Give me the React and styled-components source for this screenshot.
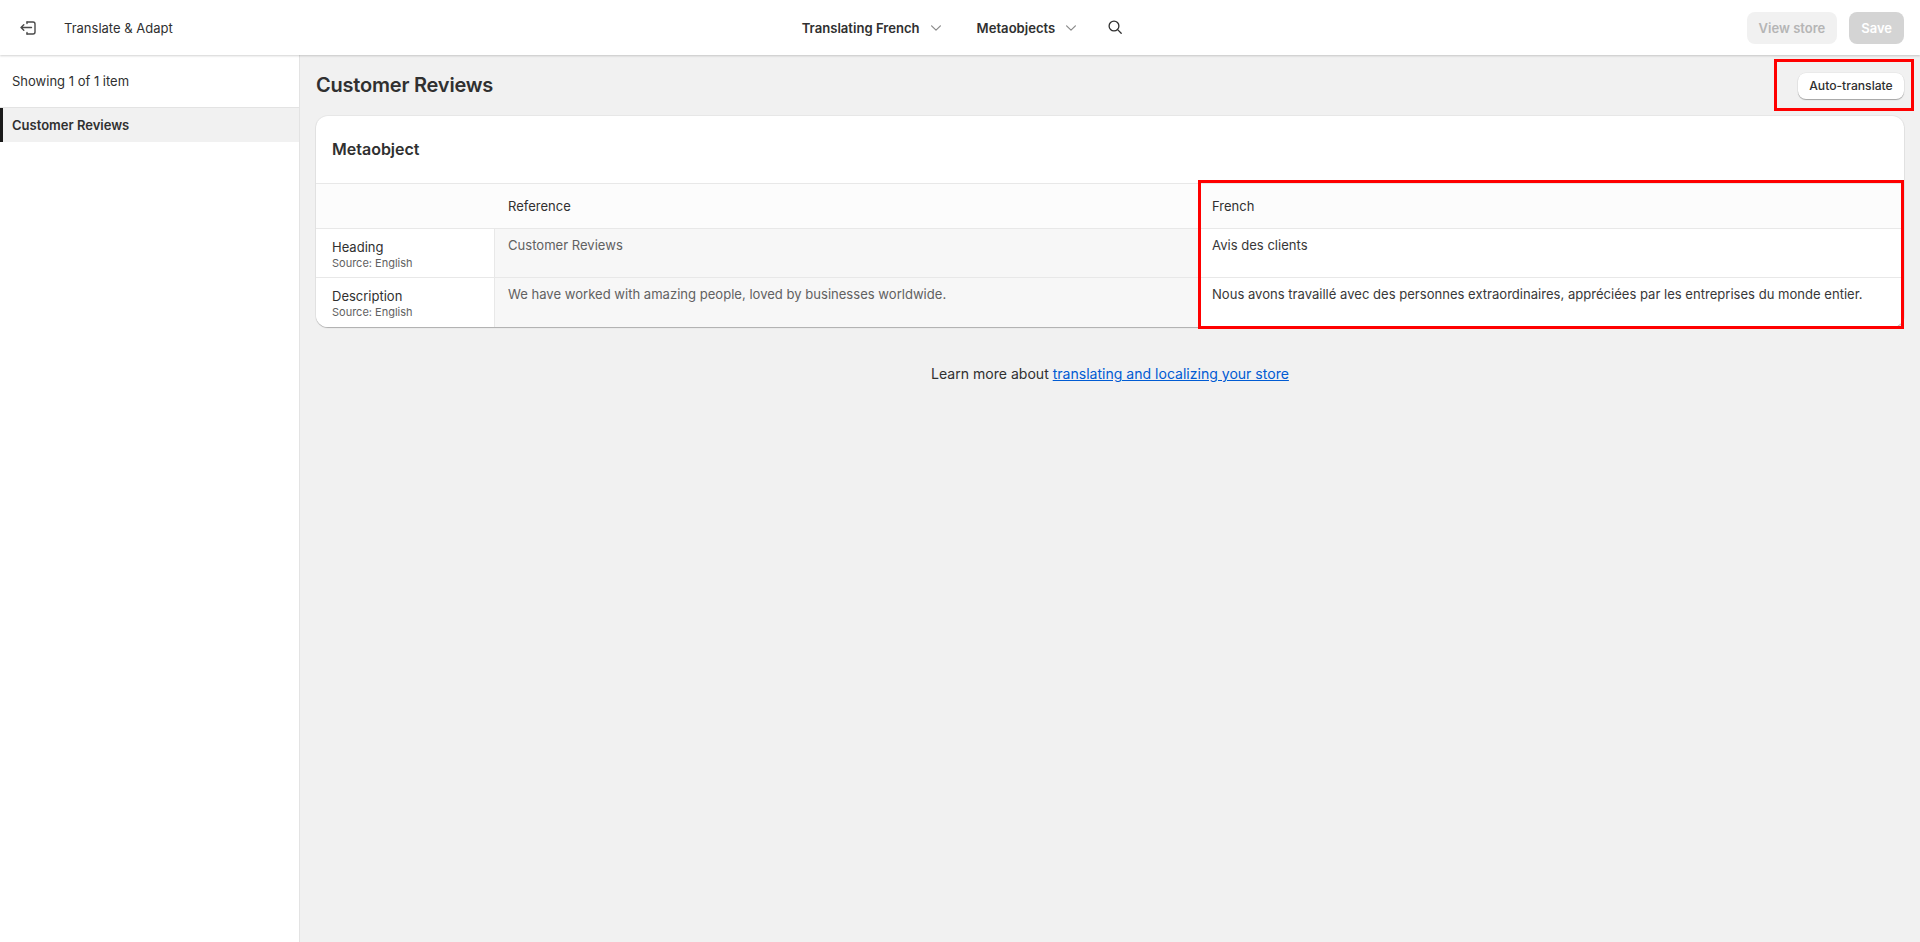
import React from 'react';
import styled, { createGlobalStyle } from 'styled-components';

const GlobalStyle = createGlobalStyle`
  html, body, #root {
    margin: 0;
    height: 100%;
  }
  body {
    font-family: Inter, "Noto Sans", sans-serif;
    font-size: 13px;
    color: #303030;
    background: #f1f1f1;
  }
`;

const Page = styled.div`
  position: relative;
  display: flex;
  flex-direction: column;
  height: 942px;
  overflow: hidden;
`;

const TopBar = styled.header`
  display: grid;
  grid-template-columns: 1fr auto 1fr;
  align-items: center;
  height: 55px;
  padding: 0 16px 0 20px;
  background: #fff;
  box-shadow: 0 1px 2px rgba(0, 0, 0, 0.18);
  position: relative;
  z-index: 1;
`;

const BarLeft = styled.div`
  display: flex;
  align-items: center;
  gap: 28px;
`;

const AppName = styled.span`
  font-size: 13px;
  color: #303030;
`;

const BarCenter = styled.nav`
  display: flex;
  align-items: center;
  gap: 36px;
`;

const NavItem = styled.div`
  display: flex;
  align-items: center;
  gap: 11px;
  font-size: 13.1px;
  font-weight: 600;
  color: #303030;
`;

const SearchWrap = styled.div`
  display: flex;
  margin: -2px 0 0 -4px;
`;

const BarRight = styled.div`
  display: flex;
  justify-content: flex-end;
  gap: 12px;
`;

const TopButton = styled.button`
  height: 32px;
  padding: 0 12px;
  border: none;
  border-radius: 8px;
  font-family: inherit;
  font-size: 13px;
  font-weight: 600;
  background: ${props => (props.$primary ? '#d4d4d4' : '#f1f1f1')};
  color: ${props => (props.$primary ? '#fff' : '#b5b5b5')};
`;

const Body = styled.div`
  flex: 1;
  display: flex;
  min-height: 0;
`;

const Sidebar = styled.aside`
  width: 299px;
  background: #fff;
  border-right: 1px solid #e3e3e3;
`;

const ItemCount = styled.div`
  height: 52px;
  padding-left: 12px;
  display: flex;
  align-items: center;
  border-bottom: 1px solid #e3e3e3;
  font-size: 13px;
  color: #303030;
`;

const SideItem = styled.div`
  height: 34px;
  display: flex;
  align-items: center;
  padding-left: 9px;
  border-left: 3px solid #1a1a1a;
  background: #f1f1f1;
  font-size: 13px;
  font-weight: 600;
  color: #303030;
`;

const Main = styled.main`
  flex: 1;
  padding: 0 16px;
`;

const TitleRow = styled.div`
  display: flex;
  justify-content: space-between;
  align-items: center;
  height: 61px;
`;

const PageTitle = styled.h1`
  margin: 0 0 2px;
  font-size: 20px;
  font-weight: 600;
  letter-spacing: -0.2px;
  color: #303030;
`;

const AutoButton = styled.button`
  height: 26px;
  width: 106px;
  padding: 0;
  border: none;
  border-radius: 8px;
  background: #fff;
  box-shadow: 0 1px 1px rgba(0, 0, 0, 0.3), 0 0 0 0.5px rgba(0, 0, 0, 0.06);
  font-family: inherit;
  font-size: 12.15px;
  font-weight: 500;
  color: #303030;
`;

const Card = styled.section`
  background: #fff;
  border-radius: 12px;
  box-shadow: 0 1px 1px rgba(0, 0, 0, 0.25), 0 0 0 1px rgba(0, 0, 0, 0.04);
  overflow: hidden;
`;

const CardTitle = styled.h2`
  display: flex;
  align-items: center;
  height: 67px;
  margin: 0;
  padding: 0 0 2px 16px;
  box-sizing: border-box;
  font-size: 16px;
  font-weight: 600;
  color: #303030;
`;

const Row = styled.div`
  display: grid;
  grid-template-columns: 179px 704px 1fr;
  height: ${props => props.$height}px;
  border-top: 1px solid #e8e8e8;
  box-sizing: border-box;
  background: ${props => (props.$head ? '#fcfcfc' : '#fff')};
`;

const HeadCell = styled.div`
  display: flex;
  align-items: center;
  padding-left: 13px;
  font-size: 13px;
  color: #303030;
`;

const LabelCell = styled.div`
  padding: 10px 0 0 16px;
  border-right: 1px solid #e8e8e8;
`;

const Label = styled.div`
  font-size: 13px;
  line-height: 16px;
  color: #303030;
`;

const Source = styled.div`
  margin-top: 1px;
  font-size: 11px;
  line-height: 14px;
  color: #616161;
`;

const RefCell = styled.div`
  padding: 8px 13px 0;
  background: #f7f7f7;
  font-size: 13.07px;
  line-height: 16px;
  color: #616161;
`;

const TransCell = styled.div`
  padding: 8px 13px 0;
  font-size: 13.07px;
  line-height: 16px;
  color: #383838;
`;

const LearnMore = styled.p`
  margin: 39px 0 0;
  text-align: center;
  font-size: 14.06px;
  line-height: 16px;
  color: #303030;
`;

const LearnLink = styled.a`
  color: #005bd3;
  text-decoration: underline;
`;

// the red annotation rectangles drawn on top of the screenshot
const Marker = styled.div`
  position: absolute;
  left: ${props => props.$x}px;
  top: ${props => props.$y}px;
  width: ${props => props.$w}px;
  height: ${props => props.$h}px;
  box-sizing: border-box;
  border: 3px solid #ff0000;
  pointer-events: none;
  z-index: 2;
`;

const ExitIcon = () => (
  <svg width="16" height="16" viewBox="0 0 16 16" fill="none" stroke="#4a4a4a" strokeWidth="1.4" strokeLinecap="round" strokeLinejoin="round">
    <path d="M7 2h6a2 2 0 0 1 2 2v8a2 2 0 0 1-2 2H7" />
    <path d="M7 2v1.5M7 14v-1.5" />
    <path d="M11.5 7.5H1M3.8 4.8 1 7.5l2.8 2.7" />
  </svg>
);

const Chevron = () => (
  <svg width="10" height="10" viewBox="0 0 10 10" fill="none" stroke="#8a8a8a" strokeWidth="1.2" strokeLinecap="round" strokeLinejoin="round">
    <path d="M.6 2.8 5 7.2l4.4-4.4" />
  </svg>
);

const SearchIcon = () => (
  <svg width="14" height="14" viewBox="0 0 14 14" fill="none" stroke="#303030" strokeWidth="1.3" strokeLinecap="round">
    <circle cx="6" cy="6" r="4.9" />
    <path d="m9.6 9.6 3.6 3.6" />
  </svg>
);

const rows = [
  { label: 'Heading', reference: 'Customer Reviews', french: 'Avis des clients', height: 49 },
  {
    label: 'Description',
    reference: 'We have worked with amazing people, loved by businesses worldwide.',
    french: 'Nous avons travaillé avec des personnes extraordinaires, appréciées par les entreprises du monde entier.',
    height: 50,
  },
];

const App = () => {
  return (
    <>
      <GlobalStyle />
      <Page>
        <TopBar>
          <BarLeft>
            <ExitIcon />
            <AppName>Translate &amp; Adapt</AppName>
          </BarLeft>
          <BarCenter>
            <NavItem>Translating French <Chevron /></NavItem>
            <NavItem>Metaobjects <Chevron /></NavItem>
            <SearchWrap><SearchIcon /></SearchWrap>
          </BarCenter>
          <BarRight>
            <TopButton>View store</TopButton>
            <TopButton $primary>Save</TopButton>
          </BarRight>
        </TopBar>
        <Body>
          <Sidebar>
            <ItemCount>Showing 1 of 1 item</ItemCount>
            <SideItem>Customer Reviews</SideItem>
          </Sidebar>
          <Main>
            <TitleRow>
              <PageTitle>Customer Reviews</PageTitle>
              <AutoButton>Auto-translate</AutoButton>
            </TitleRow>
            <Card>
              <CardTitle>Metaobject</CardTitle>
              <Row $head $height={45}>
                <HeadCell />
                <HeadCell>Reference</HeadCell>
                <HeadCell>French</HeadCell>
              </Row>
              {rows.map(row => (
                <Row key={row.label} $height={row.height}>
                  <LabelCell>
                    <Label>{row.label}</Label>
                    <Source>Source: English</Source>
                  </LabelCell>
                  <RefCell>{row.reference}</RefCell>
                  <TransCell>{row.french}</TransCell>
                </Row>
              ))}
            </Card>
            <LearnMore>
              Learn more about <LearnLink href="#">translating and localizing your store</LearnLink>
            </LearnMore>
          </Main>
        </Body>
        <Marker $x={1774} $y={59} $w={140} $h={52} />
        <Marker $x={1198} $y={180} $w={706} $h={149} />
      </Page>
    </>
  );
};

export default App;
